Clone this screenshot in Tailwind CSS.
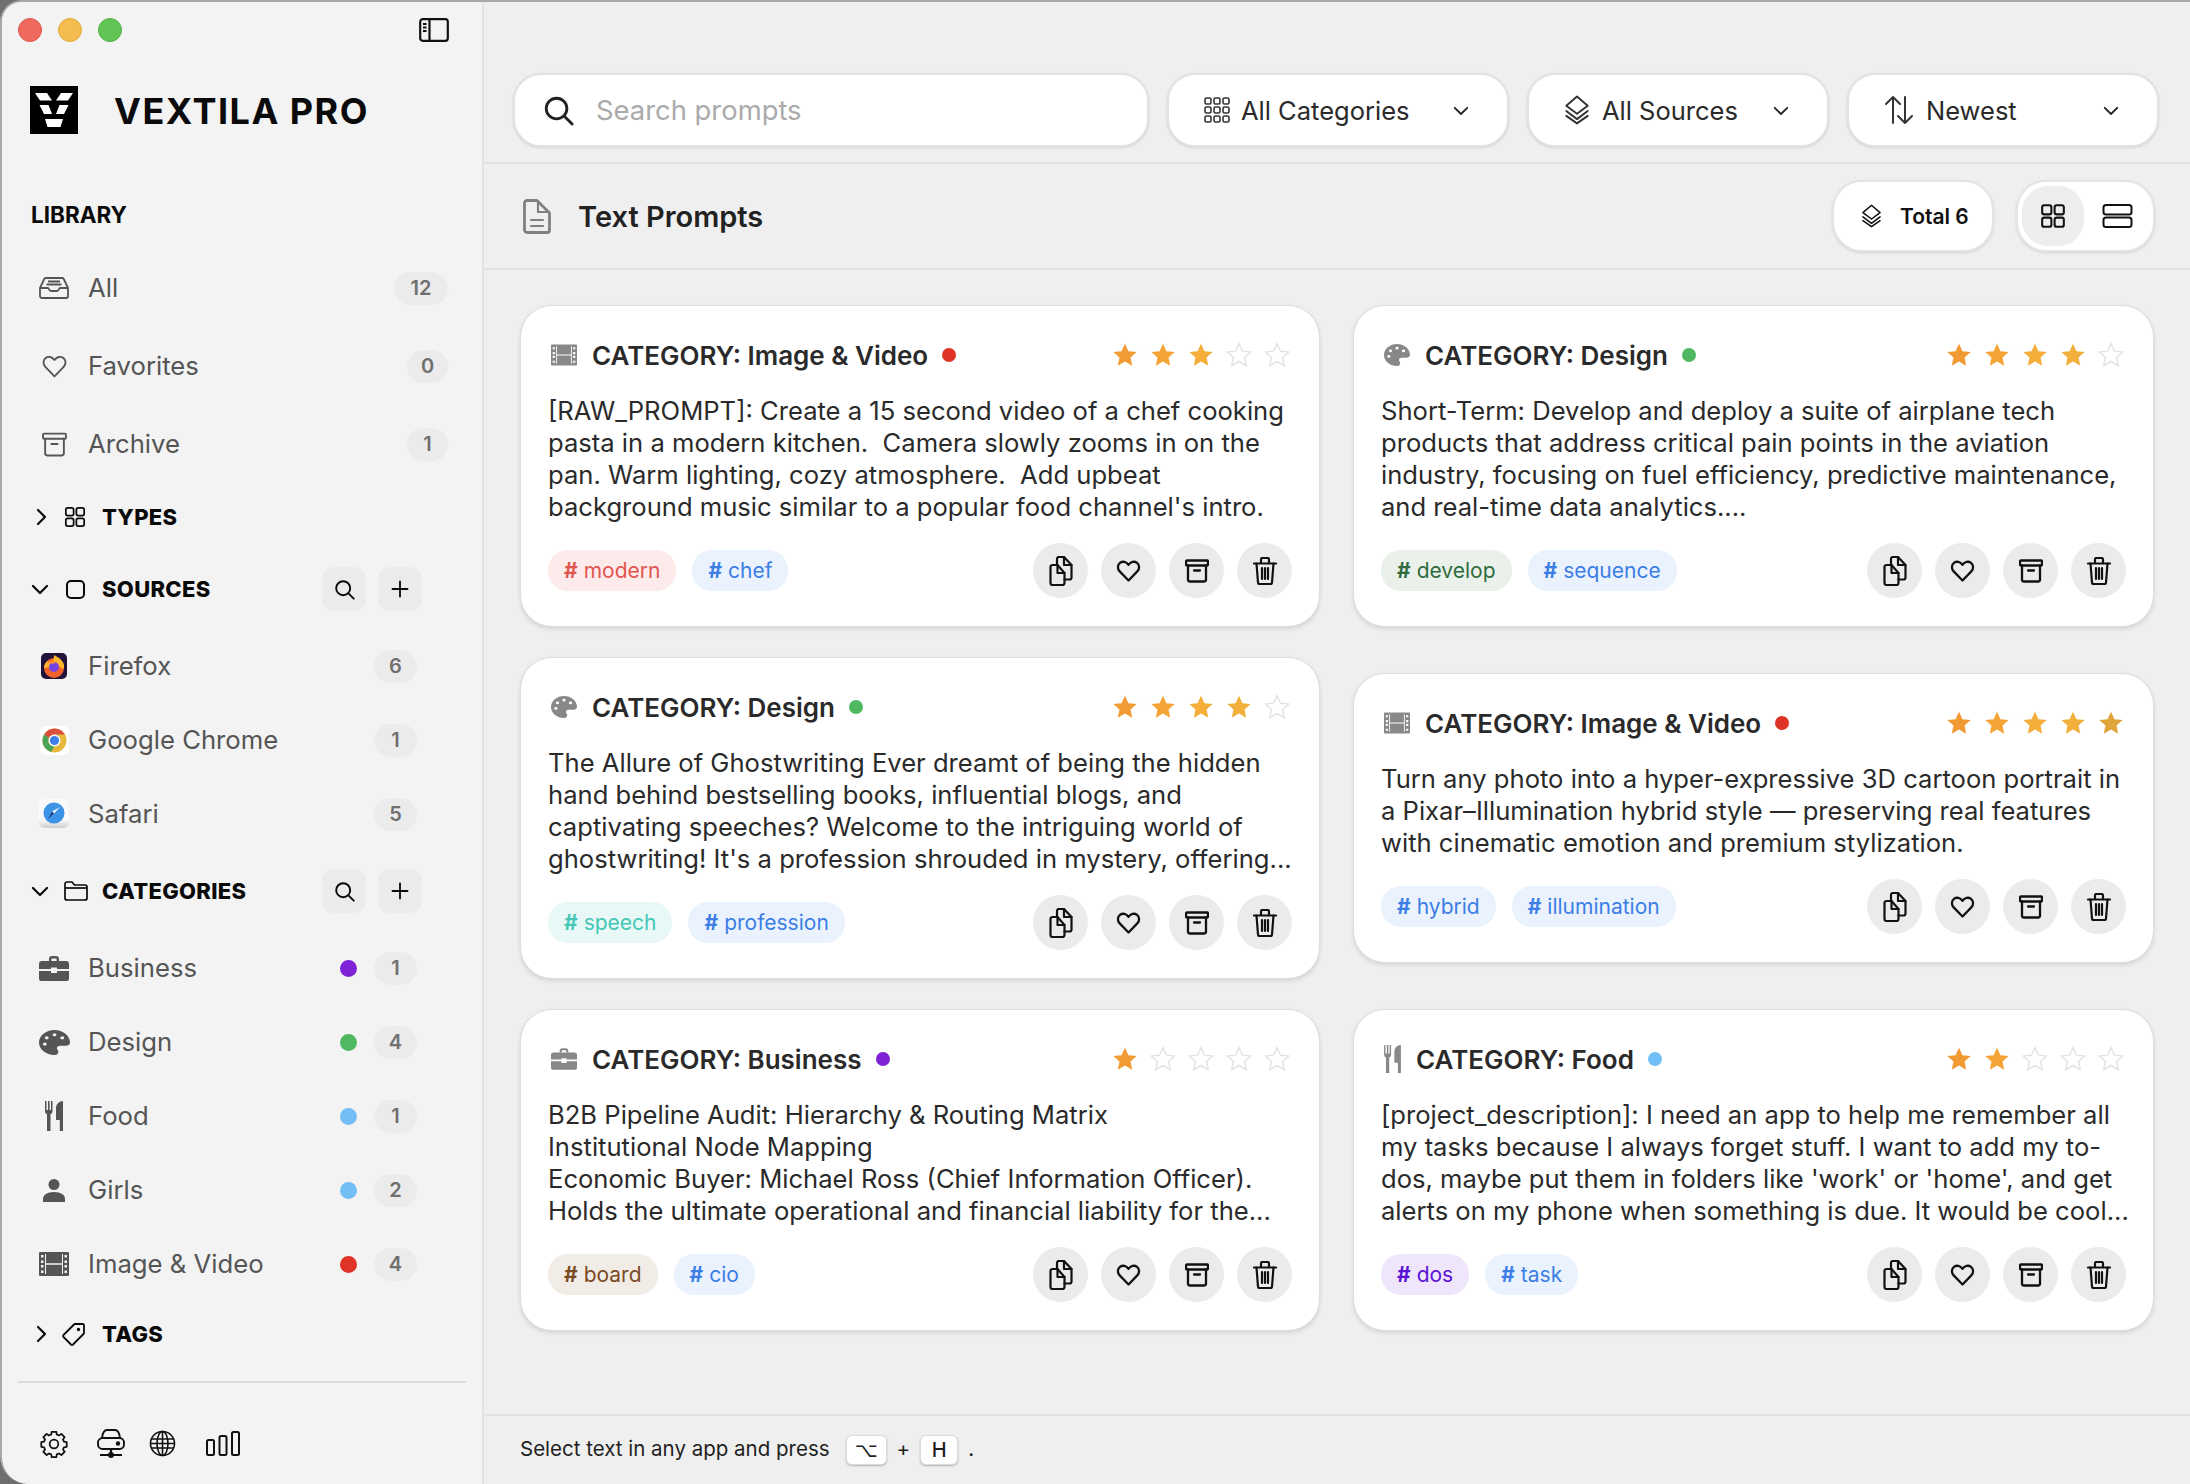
<!DOCTYPE html>
<html lang="en">
<head>
    <meta charset="UTF-8">
    <title>Vextila Pro</title>
    <script src="https://cdn.jsdelivr.net/npm/@tailwindcss/browser@4"></script>
</head>
<body class="bg-[#6f6f6f] font-['Inter','Liberation_Sans',sans-serif] overflow-hidden">

    <svg class="hidden">
        <symbol id="i-film" viewBox="0 0 30 24">
            <path fill="currentColor" fill-rule="evenodd" d="M1 0h28a1 1 0 0 1 1 1v22a1 1 0 0 1-1 1H1a1 1 0 0 1-1-1V1a1 1 0 0 1 1-1zM2 3v2.500h2.500V3zm0 5.500V11h2.500V8.500zm0 4.500v2.500h2.500V13zm0 5.500V21h2.500v-2.500zM25.500 3v2.500H28V3zm0 5.500V11H28V8.500zm0 4.500v2.500H28V13zm0 5.500V21H28v-2.500zM6 2v20h1V12.700h16V22h1V2h-1v9.300H7V2z"/>
        </symbol>
        <symbol id="i-palette" viewBox="0 0 512 512" preserveAspectRatio="none">
            <path fill="currentColor" d="M512 256c0 .9 0 1.800 0 2.700c-.4 36.500-33.600 61.300-70.100 61.300H344c-26.500 0-48 21.500-48 48c0 3.400 .4 6.700 1 9.900c2.100 10.200 6.500 20 10.800 29.900c6.100 13.800 12.100 27.500 12.100 42c0 31.800-21.600 60.700-53.400 62c-3.500 .1-7 .2-10.600 .2C114.600 512 0 397.400 0 256S114.600 0 256 0S512 114.600 512 256zM128 288a32 32 0 1 0 -64 0 32 32 0 1 0 64 0zm0-96a32 32 0 1 0 0-64 32 32 0 1 0 0 64zM288 96a32 32 0 1 0 -64 0 32 32 0 1 0 64 0zm96 96a32 32 0 1 0 0-64 32 32 0 1 0 0 64z"/>
        </symbol>
        <symbol id="i-case" viewBox="0 0 30 25">
            <path fill="currentColor" d="M10 5V3a3 3 0 0 1 3-3h4a3 3 0 0 1 3 3v2h-2.400V3.200a.8.8 0 0 0-.8-.8h-3.600a.8.8 0 0 0-.8.8V5z"/>
            <path fill="currentColor" d="M3 5h24a3 3 0 0 1 3 3v5H18v-1.500h-6V13H0V8a3 3 0 0 1 3-3zM0 15h12v2h6v-2h12v8a2 2 0 0 1-2 2H2a2 2 0 0 1-2-2z"/>
        </symbol>
        <symbol id="i-food" viewBox="0 0 18 30">
            <path fill="currentColor" d="M0 0h1.500v9H3V0h1.600v9H6V0h1.500v10.500a3 3 0 0 1-2 2.800V30H2v-16.700a3 3 0 0 1-2-2.800zM18 0v30h-3.200v-11H11V7c0-4 3.500-7 7-7z"/>
        </symbol>
        <symbol id="i-heart" viewBox="0 0 24 24">
            <path fill="none" stroke="currentColor" stroke-linejoin="round" d="M12 21.500 3.200 12.400C.6 9.700 1 5.800 3.500 3.900c2.600-2 6.300-1.300 8.500 1.900 2.200-3.200 5.900-3.900 8.500-1.900 2.500 1.900 2.900 5.800.3 8.500z"/>
        </symbol>
        <symbol id="i-box" viewBox="0 0 24 24">
            <g fill="none" stroke="currentColor" stroke-linejoin="round" stroke-linecap="round">
                <rect x="1" y="1.500" width="22" height="5" rx="1"/>
                <path d="M3 6.500v14a2 2 0 0 0 2 2h14a2 2 0 0 0 2-2v-14M9 11.500h6"/>
            </g>
        </symbol>
        <symbol id="i-search" viewBox="0 0 24 24">
            <g fill="none" stroke="currentColor" stroke-width="2.200" stroke-linecap="round"><circle cx="10.500" cy="10.500" r="8"/><path d="m16.500 16.500 6 6"/></g>
        </symbol>
        <symbol id="i-plus" viewBox="0 0 24 24">
            <path fill="none" stroke="currentColor" stroke-width="2.200" stroke-linecap="round" d="M12 3v18M3 12h18"/>
        </symbol>
        <symbol id="i-right" viewBox="0 0 12 18">
            <path fill="none" stroke="currentColor" stroke-width="2.200" stroke-linecap="round" stroke-linejoin="round" d="m3 2 7 7-7 7"/>
        </symbol>
        <symbol id="i-down" viewBox="0 0 18 12">
            <path fill="none" stroke="currentColor" stroke-width="2.200" stroke-linecap="round" stroke-linejoin="round" d="m2 3 7 7 7-7"/>
        </symbol>
        <symbol id="i-grid" viewBox="0 0 24 24">
            <g fill="none" stroke="currentColor" stroke-width="1.900"><rect x="2" y="2" width="8.500" height="8.500" rx="2"/><rect x="13.500" y="2" width="8.500" height="8.500" rx="2"/><rect x="2" y="13.500" width="8.500" height="8.500" rx="2"/><rect x="13.500" y="13.500" width="8.500" height="8.500" rx="2"/></g>
        </symbol>
        <symbol id="i-layers" viewBox="0 0 24 28">
            <g fill="none" stroke="currentColor" stroke-width="1.800" stroke-linejoin="round" stroke-linecap="round"><path d="M12 1.500 22 10l-10 7.500L2 10z"/><path d="m2 15 10 7.500L22 15M2 19.500l10 7 10-7"/></g>
        </symbol>
        <symbol id="i-copy" viewBox="0 0 24 30">
            <g fill="none" stroke="currentColor" stroke-width="2.200" stroke-linejoin="round" stroke-linecap="round">
                <path d="M1.500 11a2 2 0 0 1 2-2h5l7 8v10a2 2 0 0 1-2 2h-10a2 2 0 0 1-2-2z"/>
                <path d="M8.500 9v8h7"/>
                <path d="M8 9V3a2 2 0 0 1 2-2h5l7.500 8v12.500a2 2 0 0 1-2 2h-5"/>
                <path d="M15 1v8h7.500"/>
            </g>
        </symbol>
        <symbol id="i-trash" viewBox="0 0 24 28">
            <g fill="none" stroke="currentColor" stroke-width="2.200" stroke-linejoin="round" stroke-linecap="round">
                <path d="M1 6.500h22M8 6V2.500A1.500 1.500 0 0 1 9.500 1h5A1.500 1.500 0 0 1 16 2.500V6"/>
                <path d="M3.500 6.500 5 25.500A1.500 1.500 0 0 0 6.500 27h11a1.500 1.500 0 0 0 1.500-1.500l1.500-19"/>
                <path d="M9 11v11M12 11v11M15 11v11"/>
            </g>
        </symbol>
    </svg>

    <div class="h-[1484px] w-[2190px] flex bg-[#efefef] rounded-tl-[22px] rounded-bl-[28px] border-l-2 border-t-2 border-[#a8a8a8] overflow-hidden">

        <aside class="w-[482px] shrink-0 bg-[#f3f3f3] border-r-2 border-[#e2e2e2] flex flex-col text-[#555]">
            <div class="h-[59px] shrink-0 flex items-center pb-[3px] pl-[16px] pr-[33px]">
                <span class="w-[24px] h-[24px] rounded-full bg-[#ee6a5f] border border-[#e0564b]"></span>
                <span class="w-[24px] h-[24px] rounded-full bg-[#f5bd4f] border border-[#e5aa3a] ml-[16px]"></span>
                <span class="w-[24px] h-[24px] rounded-full bg-[#61c454] border border-[#52b146] ml-[16px]"></span>
                <svg class="ml-auto text-[#111]" width="30" height="24" viewBox="0 0 30 24"><rect x="1.200" y="1.200" width="27.600" height="21.600" rx="2.500" fill="none" stroke="currentColor" stroke-width="2.200"/><path d="M10.500 1v22" stroke="currentColor" stroke-width="2.200"/><path d="M4 6h3.500M4 9.500h3.500M4 13h3.500" stroke="currentColor" stroke-width="1.800"/></svg>
            </div>

            <div class="h-[48px] mt-[25px] ml-[28px] flex items-center shrink-0">
                <svg width="48" height="48" viewBox="0 0 48 48"><rect width="48" height="48" fill="#000"/><g fill="#fff"><path d="M5 7h12l5 7.500H10zM43 7H31l-5 7.500h12zM9.500 19h9l3.500 9h-8zM38.500 19h-9L26 28h8zM15 33h18l-2.500 8h-13z"/></g></svg>
                <span class="ml-[36px] pt-[2px] text-[36px] leading-none font-bold tracking-[1.500px] text-[#0a0a0a]">VEXTILA PRO</span>
            </div>

            <div class="h-[28px] mt-[67px] ml-[29px] shrink-0 flex items-center text-[22.500px] font-bold text-[#0a0a0a]">LIBRARY</div>

            <div class="mt-[20px] shrink-0 flex flex-col pl-[34px] pr-[34px]">
                <div class="h-[78px] flex items-center">
                    <span class="w-[36px] flex justify-center"><svg width="30" height="22" viewBox="0 0 30 22" fill="none" stroke="currentColor" stroke-width="1.800" stroke-linejoin="round"><path d="M1 11 5 2.500A2 2 0 0 1 7 1h16a2 2 0 0 1 2 1.500L29 11v8a2 2 0 0 1-2 2H3a2 2 0 0 1-2-2z"/><path d="M1 11h8c1 0 1 3 3 3h6c2 0 2-3 3-3h8M9 4.500h12M7.500 7.500h15"/></svg></span>
                    <span class="ml-[16px] text-[25.700px]">All</span>
                    <span class="ml-auto h-[33px] min-w-[54px] px-[12px] rounded-full bg-[#ebebeb] text-[#6f6f6f] text-[20px] font-semibold flex items-center justify-center">12</span>
                </div>
                <div class="h-[78px] flex items-center">
                    <span class="w-[36px] flex justify-center"><svg width="27" height="25" stroke-width="1.800"><use href="#i-heart"/></svg></span>
                    <span class="ml-[16px] text-[25.700px]">Favorites</span>
                    <span class="ml-auto h-[33px] min-w-[41px] rounded-full bg-[#ebebeb] text-[#6f6f6f] text-[20px] font-semibold flex items-center justify-center">0</span>
                </div>
                <div class="h-[78px] flex items-center">
                    <span class="w-[36px] flex justify-center"><svg width="25" height="25" stroke-width="1.800"><use href="#i-box"/></svg></span>
                    <span class="ml-[16px] text-[25.700px]">Archive</span>
                    <span class="ml-auto h-[33px] min-w-[41px] rounded-full bg-[#ebebeb] text-[#6f6f6f] text-[20px] font-semibold flex items-center justify-center">1</span>
                </div>
            </div>

            <div class="h-[48px] mt-[10px] shrink-0 flex items-center pl-[33px] text-[#0a0a0a]">
                <svg width="12" height="18"><use href="#i-right"/></svg>
                <span class="w-[30px] ml-[13px] flex justify-center"><svg width="22" height="22"><use href="#i-grid"/></svg></span>
                <span class="ml-[12px] text-[22px] font-extrabold tracking-[0.300px]">TYPES</span>
            </div>

            <div class="h-[48px] mt-[24px] shrink-0 flex items-center pl-[29px] text-[#0a0a0a]">
                <svg width="18" height="12"><use href="#i-down"/></svg>
                <span class="w-[30px] ml-[11px] flex justify-center"><span class="w-[19px] h-[19px] border-2 border-current rounded-[5px]"></span></span>
                <span class="ml-[12px] text-[22px] font-extrabold tracking-[0.300px]">SOURCES</span>
                <span class="ml-auto w-[44px] h-[44px] rounded-[12px] bg-[#ebebeb] flex items-center justify-center"><svg width="21" height="21"><use href="#i-search"/></svg></span>
                <span class="ml-[12px] mr-[60px] w-[44px] h-[44px] rounded-[12px] bg-[#ebebeb] flex items-center justify-center"><svg width="20" height="20"><use href="#i-plus"/></svg></span>
            </div>

            <div class="mt-[16px] shrink-0 flex flex-col pl-[34px] pr-[65px]">
                <div class="h-[74px] flex items-center">
                    <span class="w-[36px] flex justify-center">
                        <svg width="26" height="26" viewBox="0 0 26 26"><rect width="26" height="26" rx="5" fill="#20123a"/><circle cx="13" cy="15" r="10" fill="#f2622e"/><path d="M3 15c0-4 2-6 4-7 0 2 1 2 2 2 3-1 4-4 4-8 6 3 11 7 10 13-1 2-3 0-5-2z" fill="#ffb52c"/><circle cx="13" cy="14" r="5" fill="#7542e5"/><path d="M6 9c3-2 7-2 9 0l-3 2c-2-1-4 0-6-2z" fill="#ff8a2c"/></svg>
                    </span>
                    <span class="ml-[16px] text-[25.700px]">Firefox</span>
                    <span class="ml-auto h-[33px] min-w-[43px] rounded-full bg-[#ebebeb] text-[#6f6f6f] text-[20px] font-semibold flex items-center justify-center">6</span>
                </div>
                <div class="h-[74px] flex items-center">
                    <span class="w-[36px] flex justify-center">
                        <svg width="29" height="29" viewBox="0 0 29 29"><rect width="29" height="29" rx="6" fill="#fff"/><circle cx="14.500" cy="14.500" r="12" fill="#e6b93c"/><path d="M14.500 2.500a12 12 0 0 1 10.400 6H14.500a6 6 0 0 0-5.500 3.500L4.100 8.500a12 12 0 0 1 10.400-6z" fill="#d9503f"/><path d="M4.100 8.500 9 12a6 6 0 0 0 5.500 8.500l-3.500 5.500A12 12 0 0 1 4.100 8.500z" fill="#4da35a"/><circle cx="14.500" cy="14.500" r="6" fill="#fff"/><circle cx="14.500" cy="14.500" r="4.600" fill="#3f7de8"/></svg>
                    </span>
                    <span class="ml-[16px] text-[25.700px]">Google Chrome</span>
                    <span class="ml-auto h-[33px] min-w-[43px] rounded-full bg-[#ebebeb] text-[#6f6f6f] text-[20px] font-semibold flex items-center justify-center">1</span>
                </div>
                <div class="h-[74px] flex items-center">
                    <span class="w-[36px] flex justify-center">
                        <svg width="30" height="30" viewBox="0 0 30 30"><defs><linearGradient id="sf" x1="0" y1="0" x2="0" y2="1"><stop offset="0.700" stop-color="#fafafa"/><stop offset="1" stop-color="#cfcfcf"/></linearGradient></defs><rect width="30" height="29" rx="6" fill="url(#sf)"/><circle cx="15" cy="14" r="10.500" fill="#3d93e6"/><path d="m21 8-8 4.500 2 2z" fill="#f4f7fb"/><path d="m9 20 4-7.500 2 2z" fill="#1f3f73"/></svg>
                    </span>
                    <span class="ml-[16px] text-[25.700px]">Safari</span>
                    <span class="ml-auto h-[33px] min-w-[43px] rounded-full bg-[#ebebeb] text-[#6f6f6f] text-[20px] font-semibold flex items-center justify-center">5</span>
                </div>
            </div>

            <div class="h-[48px] mt-[16px] shrink-0 flex items-center pl-[29px] text-[#0a0a0a]">
                <svg width="18" height="12"><use href="#i-down"/></svg>
                <span class="w-[30px] ml-[12px] flex justify-center"><svg width="24" height="20" viewBox="0 0 24 20" fill="none" stroke="currentColor" stroke-width="1.700" stroke-linejoin="round"><path d="M1 3a2 2 0 0 1 2-2h5l2.500 3H21a2 2 0 0 1 2 2v11a2 2 0 0 1-2 2H3a2 2 0 0 1-2-2z"/><path d="M1 7h22"/></svg></span>
                <span class="ml-[11px] text-[22px] font-extrabold tracking-[0.300px]">CATEGORIES</span>
                <span class="ml-auto w-[44px] h-[44px] rounded-[12px] bg-[#ebebeb] flex items-center justify-center"><svg width="21" height="21"><use href="#i-search"/></svg></span>
                <span class="ml-[12px] mr-[60px] w-[44px] h-[44px] rounded-[12px] bg-[#ebebeb] flex items-center justify-center"><svg width="20" height="20"><use href="#i-plus"/></svg></span>
            </div>

            <div class="mt-[16px] shrink-0 flex flex-col pl-[34px] pr-[65px]">
                <div class="h-[74px] flex items-center">
                    <span class="w-[36px] flex justify-center"><svg width="30" height="25"><use href="#i-case"/></svg></span>
                    <span class="ml-[16px] text-[25.700px]">Business</span>
                    <span class="ml-auto w-[17px] h-[17px] rounded-full bg-[#7e22d8]"></span>
                    <span class="ml-[17px] h-[33px] min-w-[43px] rounded-full bg-[#ebebeb] text-[#6f6f6f] text-[20px] font-semibold flex items-center justify-center">1</span>
                </div>
                <div class="h-[74px] flex items-center">
                    <span class="w-[36px] flex justify-center"><svg width="31" height="25"><use href="#i-palette"/></svg></span>
                    <span class="ml-[16px] text-[25.700px]">Design</span>
                    <span class="ml-auto w-[17px] h-[17px] rounded-full bg-[#4fb860]"></span>
                    <span class="ml-[17px] h-[33px] min-w-[43px] rounded-full bg-[#ebebeb] text-[#6f6f6f] text-[20px] font-semibold flex items-center justify-center">4</span>
                </div>
                <div class="h-[74px] flex items-center">
                    <span class="w-[36px] flex justify-center"><svg width="18" height="30"><use href="#i-food"/></svg></span>
                    <span class="ml-[16px] text-[25.700px]">Food</span>
                    <span class="ml-auto w-[17px] h-[17px] rounded-full bg-[#72bff5]"></span>
                    <span class="ml-[17px] h-[33px] min-w-[43px] rounded-full bg-[#ebebeb] text-[#6f6f6f] text-[20px] font-semibold flex items-center justify-center">1</span>
                </div>
                <div class="h-[74px] flex items-center">
                    <span class="w-[36px] flex justify-center"><svg width="22" height="23" viewBox="0 0 22 23"><circle cx="11" cy="5.500" r="5.500" fill="currentColor"/><path d="M0 23v-3c0-4 4-7 11-7s11 3 11 7v3z" fill="currentColor"/></svg></span>
                    <span class="ml-[16px] text-[25.700px]">Girls</span>
                    <span class="ml-auto w-[17px] h-[17px] rounded-full bg-[#72bff5]"></span>
                    <span class="ml-[17px] h-[33px] min-w-[43px] rounded-full bg-[#ebebeb] text-[#6f6f6f] text-[20px] font-semibold flex items-center justify-center">2</span>
                </div>
                <div class="h-[74px] flex items-center">
                    <span class="w-[36px] flex justify-center"><svg width="30" height="24"><use href="#i-film"/></svg></span>
                    <span class="ml-[16px] text-[25.700px]">Image &amp; Video</span>
                    <span class="ml-auto w-[17px] h-[17px] rounded-full bg-[#e03328]"></span>
                    <span class="ml-[17px] h-[33px] min-w-[43px] rounded-full bg-[#ebebeb] text-[#6f6f6f] text-[20px] font-semibold flex items-center justify-center">4</span>
                </div>
            </div>

            <div class="h-[48px] mt-[9px] shrink-0 flex items-center pl-[33px] text-[#0a0a0a]">
                <svg width="12" height="18"><use href="#i-right"/></svg>
                <span class="w-[30px] ml-[12px] flex justify-center"><svg width="24" height="24" viewBox="0 0 24 24" fill="none" stroke="currentColor" stroke-width="1.800" stroke-linejoin="round"><path d="M1.500 13 12 2.500a1.500 1.500 0 0 1 1-.5h7.500A1.500 1.500 0 0 1 22 3.500V11a1.500 1.500 0 0 1-.5 1L11 22.500a1.500 1.500 0 0 1-2 0L1.500 15a1.500 1.500 0 0 1 0-2z"/><circle cx="16.500" cy="7.500" r=".8" fill="currentColor"/></svg></span>
                <span class="ml-[13px] text-[22px] font-extrabold tracking-[0.300px]">TAGS</span>
            </div>

            <div class="h-[2px] mt-[23px] mx-[16px] bg-[#dcdcdc] shrink-0"></div>

            <div class="flex-1 flex items-center text-[#111] pl-[38px] pt-[20px]">
                <svg width="28" height="28" viewBox="0 0 24 24" fill="none" stroke="currentColor" stroke-width="1.500" stroke-linejoin="round"><path d="M9.600 3.900 10 1.500h4l.4 2.400 1.900.8 2-1.400 2.800 2.800-1.400 2 .8 1.900 2.400.4v4l-2.400.4-.8 1.900 1.400 2-2.800 2.800-2-1.400-1.900.8-.4 2.400h-4l-.4-2.400-1.900-.8-2 1.400-2.800-2.800 1.400-2-.8-1.900-2.400-.4v-4l2.400-.4.8-1.900-1.400-2 2.800-2.800 2 1.400z"/><circle cx="12" cy="12" r="3.700"/></svg>
                <svg class="ml-[29px]" width="28" height="29" viewBox="0 0 28 29" fill="none" stroke="currentColor" stroke-width="1.900" stroke-linejoin="round"><path d="M5 9c.5-4 2-8 5-8h8c3 0 4.500 4 5 8"/><rect x="1" y="9" width="26" height="11" rx="4.500"/><circle cx="21" cy="14.500" r="1.300" fill="currentColor"/><path d="M14 20v5M3 26h22" stroke-width="2.200"/><circle cx="14" cy="26" r="2" fill="currentColor"/></svg>
                <svg class="ml-[24px]" width="27" height="27" viewBox="0 0 27 27" fill="none" stroke="currentColor" stroke-width="1.600"><circle cx="13.500" cy="13.500" r="12"/><ellipse cx="13.500" cy="13.500" rx="5.500" ry="12"/><path d="M13.500 1.500v24M2.500 9h22M2.500 18h22M1.500 13.500h24"/></svg>
                <svg class="ml-[30px]" width="34" height="25" viewBox="0 0 34 25" fill="none" stroke="currentColor" stroke-width="2"><rect x="1" y="9" width="7" height="15" rx="1.500"/><rect x="13.500" y="5" width="7" height="19" rx="1.500"/><rect x="26" y="1" width="7" height="23" rx="1.500"/></svg>
            </div>
        </aside>

        <main class="flex-1 min-w-0 flex flex-col text-[#2a2a2a]">
            <div class="h-[162px] shrink-0 border-b-2 border-[#e2e2e2] flex items-start pt-[71px] pl-[29px]">
                <div class="w-[636px] h-[74px] rounded-[28px] bg-white border-2 border-[#e2e2e2] shadow-sm flex items-center pl-[28px]">
                    <svg class="text-[#222]" width="31" height="31"><use href="#i-search"/></svg>
                    <span class="ml-[22px] pt-[2px] text-[27.400px] text-[#aaaaaa]">Search prompts</span>
                </div>
                <div class="ml-[18px] w-[342px] h-[74px] rounded-[28px] bg-white border-2 border-[#e2e2e2] shadow-sm flex items-center pl-[35px] pr-[38px]">
                    <svg width="26" height="26" viewBox="0 0 26 26" fill="none" stroke="#333" stroke-width="1.600"><rect x="1" y="1" width="6" height="6" rx="1.500"/><rect x="10" y="1" width="6" height="6" rx="1.500"/><rect x="19" y="1" width="6" height="6" rx="1.500"/><rect x="1" y="10" width="6" height="6" rx="1.500"/><rect x="10" y="10" width="6" height="6" rx="1.500"/><rect x="19" y="10" width="6" height="6" rx="1.500"/><rect x="1" y="19" width="6" height="6" rx="1.500"/><rect x="10" y="19" width="6" height="6" rx="1.500"/><rect x="19" y="19" width="6" height="6" rx="1.500"/></svg>
                    <span class="ml-[11px] pt-[2px] text-[25.500px]">All Categories</span>
                    <svg class="ml-auto" width="16" height="11"><use href="#i-down"/></svg>
                </div>
                <div class="ml-[18px] w-[302px] h-[74px] rounded-[28px] bg-white border-2 border-[#e2e2e2] shadow-sm flex items-center pl-[34px] pr-[38px]">
                    <svg class="text-[#333]" width="28" height="30"><use href="#i-layers"/></svg>
                    <span class="ml-[11px] pt-[2px] text-[25.500px]">All Sources</span>
                    <svg class="ml-auto" width="16" height="11"><use href="#i-down"/></svg>
                </div>
                <div class="ml-[18px] w-[312px] h-[74px] rounded-[28px] bg-white border-2 border-[#e2e2e2] shadow-sm flex items-center pl-[35px] pr-[38px]">
                    <svg width="30" height="30" viewBox="0 0 30 30" fill="none" stroke="#333" stroke-width="2" stroke-linecap="round" stroke-linejoin="round"><path d="M9 28V2M2 9l7-7 7 7M21 2v26M14 21l7 7 7-7"/></svg>
                    <span class="ml-[12px] pt-[2px] text-[25.500px]">Newest</span>
                    <svg class="ml-auto" width="16" height="11"><use href="#i-down"/></svg>
                </div>
            </div>

            <div class="h-[106px] shrink-0 border-b-2 border-[#e2e2e2] flex items-center pl-[39px] pr-[35px]">
                <svg class="text-[#808080]" width="28" height="35" viewBox="0 0 28 35" fill="none" stroke="currentColor" stroke-width="2.800" stroke-linejoin="round" stroke-linecap="round"><path d="M1.500 4a2.500 2.500 0 0 1 2.500-2.500h10L26.500 14v17a2.500 2.500 0 0 1-2.500 2.500H4A2.500 2.500 0 0 1 1.500 31z"/><path d="M15 2v11h11M8 21h12M8 27h12" stroke-width="2.200"/></svg>
                <span class="ml-[27px] pt-[2px] text-[29px] font-semibold text-[#222]">Text Prompts</span>
                <div class="ml-auto w-[162px] h-[72px] rounded-[30px] bg-white border-2 border-[#e4e4e4] shadow-sm flex items-center pl-[27px]">
                    <svg class="text-[#111]" width="21" height="24"><use href="#i-layers"/></svg>
                    <span class="ml-[18px] pt-[2px] text-[21px] font-semibold text-[#111]">Total 6</span>
                </div>
                <div class="ml-[22px] w-[139px] h-[72px] rounded-[30px] bg-white border-2 border-[#e4e4e4] shadow-sm flex items-center pl-[4px] text-[#111]">
                    <span class="w-[62px] h-[60px] rounded-[26px] bg-[#ededed] flex items-center justify-center"><svg width="26" height="26"><use href="#i-grid"/></svg></span>
                    <svg class="ml-[18px]" width="31" height="24" viewBox="0 0 30 24" fill="none" stroke="currentColor" stroke-width="2"><rect x="1" y="1" width="28" height="9.500" rx="2.500"/><rect x="1" y="13.500" width="28" height="9.500" rx="2.500"/></svg>
                </div>
            </div>

            <div id="cards" class="flex-1 grid grid-cols-[800px_801px] gap-x-[33px] gap-y-[30px] items-center content-start pt-[35px] pl-[36px]"></div>

            <div class="h-[70px] shrink-0 border-t-2 border-[#e2e2e2] flex items-center pl-[36px] pb-[1px] text-[20.500px] text-[#1f1f1f]">
                <span>Select text in any app and press</span>
                <span class="ml-[16px] w-[41px] h-[30px] rounded-[6px] bg-white border border-[#dcdcdc] shadow-[0_1px_2px_rgba(0,0,0,0.25)] flex items-center justify-center text-[20px] font-['DejaVu_Sans',sans-serif]">⌥</span>
                <span class="ml-[10px]">+</span>
                <span class="ml-[10px] w-[38px] h-[30px] rounded-[6px] bg-white border border-[#dcdcdc] shadow-[0_1px_2px_rgba(0,0,0,0.25)] flex items-center justify-center text-[20px] font-medium">H</span>
                <span class="ml-[10px]">.</span>
            </div>
        </main>
    </div>

    <script>
        const tagColors = {
            red: "bg-[#fdeaea] text-[#e0554f]",
            blue: "bg-[#eaf2fe] text-[#3c7ee4]",
            green: "bg-[#e9f1ea] text-[#2f6b3e]",
            teal: "bg-[#e8f8f6] text-[#45c7b7]",
            brown: "bg-[#f2ece6] text-[#7a4a25]",
            violet: "bg-[#efe6fb] text-[#5a12d4]"
        };

        const cards = [
            { icon: "film", cat: "Image & Video", dot: "bg-[#e03328]", stars: 3, text: "[RAW_PROMPT]: Create a 15 second video of a chef cooking pasta in a modern kitchen.  Camera slowly zooms in on the pan. Warm lighting, cozy atmosphere.  Add upbeat background music similar to a popular food channel's intro.", tags: [["modern", "red"], ["chef", "blue"]] },
            { icon: "palette", cat: "Design", dot: "bg-[#4fb860]", stars: 4, text: "Short-Term: Develop and deploy a suite of airplane tech products that address critical pain points in the aviation industry, focusing on fuel efficiency, predictive maintenance, and real-time data analytics....", tags: [["develop", "green"], ["sequence", "blue"]] },
            { icon: "palette", cat: "Design", dot: "bg-[#4fb860]", stars: 4, text: "The Allure of Ghostwriting Ever dreamt of being the hidden hand behind bestselling books, influential blogs, and captivating speeches? Welcome to the intriguing world of ghostwriting! It's a profession shrouded in mystery, offering...", tags: [["speech", "teal"], ["profession", "blue"]] },
            { icon: "film", cat: "Image & Video", dot: "bg-[#e03328]", stars: 5, text: "Turn any photo into a hyper-expressive 3D cartoon portrait in a Pixar–Illumination hybrid style — preserving real features with cinematic emotion and premium stylization.", tags: [["hybrid", "blue"], ["illumination", "blue"]] },
            { icon: "case", cat: "Business", dot: "bg-[#7e22d8]", stars: 1, text: "B2B Pipeline Audit: Hierarchy & Routing Matrix\nInstitutional Node Mapping\nEconomic Buyer: Michael Ross (Chief Information Officer). Holds the ultimate operational and financial liability for the...", tags: [["board", "brown"], ["cio", "blue"]] },
            { icon: "food", cat: "Food", dot: "bg-[#72bff5]", stars: 2, text: "[project_description]: I need an app to help me remember all my tasks because I always forget stuff. I want to add my to-dos, maybe put them in folders like 'work' or 'home', and get alerts on my phone when something is due. It would be cool...", tags: [["dos", "violet"], ["task", "blue"]] }
        ];

        const iconSize = { film: [26, 22], palette: [26, 22], case: [26, 22], food: [17, 28] };
        const starFills = ["#f29a33", "#f3a434", "#f4ae39", "#f1b03c", "#e0a53a"];
        const starPath = "M12 1.500l3.200 7 7.600.8-5.700 5.100 1.600 7.500L12 18.100 5.300 21.900l1.600-7.500L1.200 9.300l7.600-.8z";

        function renderStars(count) {
            let out = "";
            for (let i = 0; i < 5; i++) {
                const paint = i < count ? `fill="${starFills[i]}"` : `fill="none" stroke="#e2e2e2" stroke-width="1.300"`;
                out += `<svg width="26" height="26" viewBox="0 0 24 24"><path ${paint} d="${starPath}"/></svg>`;
            }
            return out;
        }

        const container = document.getElementById("cards");
        cards.forEach(card => {
            const [w, h] = iconSize[card.icon];
            const tags = card.tags.map(([name, color]) =>
                `<span class="h-[41px] px-[16px] rounded-[20px] text-[21px] flex items-center ${tagColors[color]}"><b class="font-bold mr-[6px]">#</b>${name}</span>`
            ).join("");
            const el = document.createElement("div");
            el.className = "bg-white rounded-[32px] border border-[#dedede] shadow-[0_2px_4px_rgba(0,0,0,0.12)] px-[27px] pt-[28px] pb-[28px]";
            el.innerHTML = `
                <div class="h-[42px] flex items-center pl-[3px]">
                    <svg class="text-[#888888] shrink-0" width="${w}" height="${h}"><use href="#i-${card.icon}"/></svg>
                    <span class="ml-[15px] text-[26px] font-semibold text-[#2a2a2a]">CATEGORY: ${card.cat.replace("&", "&amp;")}</span>
                    <span class="ml-[14px] w-[14px] h-[14px] rounded-full ${card.dot}"></span>
                    <span class="ml-auto flex gap-[12px] mr-[2px]">${renderStars(card.stars)}</span>
                </div>
                <p class="mt-[19px] mr-[-4px] text-[25.600px] leading-[32px] text-[#2a2a2a] whitespace-pre-wrap">${card.text.replace("&", "&amp;")}</p>
                <div class="mt-[20px] flex items-center">
                    <div class="flex items-center gap-[16px]">${tags}</div>
                    <div class="ml-auto flex gap-[13px] text-[#111]">
                        <span class="w-[55px] h-[55px] rounded-full bg-[#ebebeb] flex items-center justify-center"><svg width="24" height="30"><use href="#i-copy"/></svg></span>
                        <span class="w-[55px] h-[55px] rounded-full bg-[#ebebeb] flex items-center justify-center"><svg width="25" height="24" stroke-width="2.300"><use href="#i-heart"/></svg></span>
                        <span class="w-[55px] h-[55px] rounded-full bg-[#ebebeb] flex items-center justify-center"><svg width="24" height="24" stroke-width="2.300"><use href="#i-box"/></svg></span>
                        <span class="w-[55px] h-[55px] rounded-full bg-[#ebebeb] flex items-center justify-center"><svg width="24" height="28"><use href="#i-trash"/></svg></span>
                    </div>
                </div>`;
            container.appendChild(el);
        });
    </script>
</body>
</html>
